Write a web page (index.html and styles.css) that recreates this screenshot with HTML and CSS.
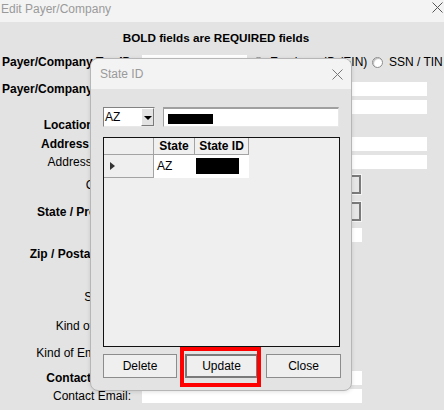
FILE: index.html
```html
<!DOCTYPE html>
<html lang="en">
<head>
    <meta charset="UTF-8">
    <title>Edit Payer/Company</title>
    <link rel="stylesheet" href="styles.css">
</head>
<body>
    <div class="window">
        <div class="titlebar">
            <span>Edit Payer/Company</span>
            <svg class="close" width="11" height="11" viewBox="0 0 11 11"><path d="M0.5 0.5 L10.5 10.5 M10.5 0.5 L0.5 10.5" stroke="#555" stroke-width="1"/></svg>
        </div>

        <div class="form">
            <div class="heading">BOLD fields are REQUIRED fields</div>

            <div class="row">
                <label class="label req wide">Payer/Company Tax ID:</label>
                <div class="field tax"></div>
                <div class="radios">
                    <span class="option first"><i class="radio"></i>Employer ID (EIN)</span>
                    <span class="option"><i class="radio"></i>SSN / TIN</span>
                </div>
            </div>
            <div class="row">
                <label class="label req wide">Payer/Company Name:</label>
                <div class="field long"></div>
            </div>
            <div class="row">
                <label class="label"></label>
                <div class="field long"></div>
            </div>
            <div class="row">
                <label class="label req">Location Code:</label>
                <div class="field short"></div>
            </div>
            <div class="row">
                <label class="label req">Address Line 1:</label>
                <div class="field long"></div>
            </div>
            <div class="row">
                <label class="label">Address Line 2:</label>
                <div class="field long"></div>
            </div>
            <div class="row tall">
                <label class="label">Country:</label>
                <div class="select"><span class="select-btn"><i class="arrow"></i></span></div>
            </div>
            <div class="row tall">
                <label class="label req">State / Province:</label>
                <div class="select"><span class="select-btn"><i class="arrow"></i></span></div>
            </div>
            <div class="row">
                <label class="label">City:</label>
                <div class="field mid"></div>
            </div>
            <div class="row">
                <label class="label req">Zip / Postal Code:</label>
                <div class="field short"></div>
            </div>
            <div class="row">
                <label class="label">State ID:</label>
                <div class="field short"></div>
            </div>
            <div class="row">
                <label class="label">Kind of Payer:</label>
                <div class="field short"></div>
            </div>
            <div class="row">
                <label class="label">Kind of Employer:</label>
                <div class="field short"></div>
            </div>
            <div class="row">
                <label class="label req">Contact Name:</label>
                <div class="field mid"></div>
            </div>
            <div class="row">
                <label class="label">Contact Email:</label>
                <div class="field mid"></div>
            </div>
        </div>

        <!-- State ID dialog, sits over the form -->
        <div class="dialog">
            <div class="dlg-title">
                <span>State ID</span>
                <svg class="close" width="11" height="11" viewBox="0 0 11 11"><path d="M0.5 0.5 L10.5 10.5 M10.5 0.5 L0.5 10.5" stroke="#777" stroke-width="1"/></svg>
            </div>
            <div class="dlg-body">
                <div class="entry">
                    <div class="combo">
                        <span class="combo-text">AZ</span>
                        <span class="combo-btn"><i class="arrow"></i></span>
                    </div>
                    <div class="textbox"><span class="redact"></span></div>
                </div>

                <div class="grid">
                    <div class="cell corner"></div>
                    <div class="cell head">State</div>
                    <div class="cell head">State ID</div>
                    <div class="cell rowhead"><i class="pointer"></i></div>
                    <div class="cell data">AZ</div>
                    <div class="cell data"><span class="redact cell-redact"></span></div>
                </div>

                <div class="buttons">
                    <button class="btn delete">Delete</button>
                    <button class="btn update">Update</button>
                    <button class="btn close-btn">Close</button>
                </div>
            </div>
            <div class="highlight"></div>
        </div>
    </div>
</body>
</html>
```

FILE: styles.css
```css
* {
    box-sizing: border-box;
}
body {
    margin: 0;
    font-family: "Liberation Sans", Arial, sans-serif;
    font-size: 12px;
    color: #000;
    background-color: #e3e3e3;
}
.window {
    position: relative;
    width: 444px;
    height: 410px;
    overflow: hidden;
    background-color: #e3e3e3;
}
.titlebar {
    height: 22px;
    background-color: #f3f3f3;
    color: #9a9a9a;
    display: flex;
    justify-content: space-between;
    align-items: flex-start;
    padding: 2px 1px 0 1px;
    line-height: 14px;
}

/* background form */
.form {
    display: grid;
    grid-template-rows: 26px 21px 27px 18px 18px 19px 18px 26px 27px 20px 19px 43px 29px 27px 25px 18px;
}
.heading {
    align-self: end;
    height: 20px;
    line-height: 20px;
    text-align: center;
    font-weight: bold;
    font-size: 11.7px;
    padding-right: 12px;
}
.row {
    align-self: end;
    height: 14px;
    display: flex;
    align-items: center;
}
.row.tall {
    height: 21px;
}
.label {
    flex: none;
    width: 131px;
    margin-right: 11px;
    text-align: right;
    white-space: nowrap;
    line-height: 14px;
}
.label.req {
    font-weight: bold;
}
.label.wide {
    text-align: left;
    padding-left: 2px;
}
.field {
    height: 14px;
    background-color: #fff;
}
.field.tax {
    width: 105px;
}
.field.long {
    width: 285px;
}
.field.mid {
    width: 220px;
}
.field.short {
    width: 150px;
}
.radios {
    display: flex;
    margin-left: 6px;
}
.option {
    display: flex;
    align-items: center;
    white-space: nowrap;
}
.option.first {
    width: 119px;
}
.radio {
    width: 11px;
    height: 11px;
    border-radius: 50%;
    border: 1px solid #8c8c8c;
    background-color: #fff;
    box-shadow: inset 1px 1px 1px #bdbdbd;
    margin-right: 6px;
}
.select {
    width: 220px;
    height: 21px;
    background-color: #fff;
    border: 1px solid #f4f4f4;
    display: flex;
    justify-content: flex-end;
}
.select-btn {
    width: 17px;
    height: 19px;
    border: 2px solid;
    border-color: #7a7a7a #7a7a7a #7a7a7a #e8e8e8;
    background-color: #e6e6e6;
    padding: 5px 0 0 1px;
}
.select-btn .arrow {
    border-width: 4px 4px 0 0;
    border-color: #000 transparent transparent transparent;
}
.arrow {
    display: block;
    width: 0;
    height: 0;
    border-style: solid;
    border-width: 4px 4px 0 4px;
    border-color: #000 transparent transparent transparent;
}

/* dialog */
.dialog {
    position: absolute;
    left: 90px;
    top: 58px;
    width: 262px;
    height: 333px;
    border: 1px solid #b6b6b6;
    border-radius: 8px;
    background-color: #e3e3e3;
    overflow: hidden;
    box-shadow: 0 1px 4px rgba(0, 0, 0, 0.12);
}
.dlg-title {
    height: 30px;
    background-color: #f3f3f3;
    color: #9a9a9a;
    display: flex;
    justify-content: space-between;
    align-items: center;
    padding: 0 8px 0 9px;
}
.dlg-body {
    padding: 18px 0 0 12px;
}
.entry {
    display: flex;
    gap: 8px;
    height: 20px;
}
.combo {
    width: 52px;
    height: 20px;
    display: flex;
    background-color: #fff;
    border: 1px solid;
    border-color: #828282 #e8e8e8 #e8e8e8 #828282;
}
.combo-text {
    flex: 1;
    padding: 2px 0 0 1px;
}
.combo-btn {
    width: 13px;
    border: 1px solid;
    border-color: #fff #7a7a7a #7a7a7a #fff;
    background-color: #e3e3e3;
    padding: 7px 0 0 2px;
}
.textbox {
    width: 176px;
    height: 20px;
    background-color: #fff;
    border: 1px solid;
    border-top: 2px solid #a0a0a0;
    border-color: #a0a0a0 #e8e8e8 #e8e8e8 #a0a0a0;
    padding: 5px 0 0 4px;
}
.redact {
    display: block;
    width: 45px;
    height: 10px;
    background-color: #000;
}

.grid {
    margin-top: 10px;
    width: 237px;
    height: 210px;
    border: 1px solid #111;
    background-color: #efefef;
    display: grid;
    grid-template-columns: 50px 41px 54px;
    grid-template-rows: 17px 23px;
    align-content: start;
}
.cell {
    border-right: 1px solid #a3a3a3;
    border-bottom: 1px solid #a3a3a3;
}
.head {
    font-weight: bold;
    text-align: center;
    line-height: 16px;
    background-color: #f0f0f0;
}
.rowhead {
    display: flex;
    align-items: center;
    padding-left: 6px;
}
.pointer {
    width: 0;
    height: 0;
    border-style: solid;
    border-width: 4px 0 4px 5px;
    border-color: transparent transparent transparent #333;
}
.data {
    background-color: #fff;
    border: none;
    padding: 4px 0 0 3px;
}
.cell-redact {
    width: 43px;
    height: 16px;
    margin-top: -1px;
    margin-left: -2px;
}

.buttons {
    margin-top: 7px;
    display: flex;
    gap: 8px;
}
.btn {
    height: 24px;
    font-family: "Liberation Sans", Arial, sans-serif;
    font-size: 12px;
    color: #000;
    background-color: #efefef;
    border: 1px solid #8c8c8c;
    padding: 0;
}
.btn.delete {
    width: 74px;
}
.btn.update {
    width: 73px;
    border: 2px solid #7a7a7a;
}
.btn.close-btn {
    width: 75px;
}

/* red annotation box around Update */
.highlight {
    position: absolute;
    left: 89px;
    top: 288px;
    width: 81px;
    height: 40px;
    border: 4px solid #ff0000;
}
```
